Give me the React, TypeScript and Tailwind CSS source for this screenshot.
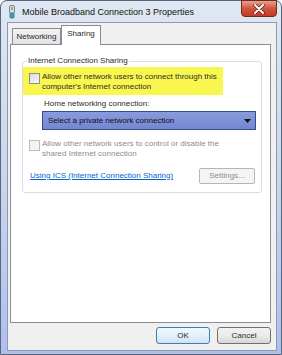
import React from "react";

function ModemIcon() {
  return (
    <svg width="8" height="14" viewBox="0 0 8 14">
      <rect x="1.5" y="0.5" width="5" height="8" rx="1.5" fill="#d9dde2" stroke="#7d8590" />
      <rect x="2" y="8" width="4" height="5" rx="1" fill="#3aa6b9" stroke="#2b7080" strokeWidth="0.8" />
      <rect x="3" y="2" width="2" height="3" fill="#9aa3ad" />
    </svg>
  );
}

function CloseGlyph() {
  return (
    <svg width="12" height="10" viewBox="0 0 12 10">
      <path d="M2 1 L10 9 M10 1 L2 9" stroke="#5a1d14" strokeWidth="3.4" strokeLinecap="round" />
      <path d="M2 1 L10 9 M10 1 L2 9" stroke="#ffffff" strokeWidth="2" strokeLinecap="round" />
    </svg>
  );
}

function CheckBox({ disabled }: { disabled?: boolean }) {
  return (
    <div
      className={`w-[11px] h-[11px] shrink-0 border ${
        disabled
          ? "border-[#bcbcbc] bg-[#f4f4f4]"
          : "border-[#8e8f8f] bg-gradient-to-br from-[#dcdcdc] to-[#f7f7f7]"
      }`}
    />
  );
}

export default function App() {
  return (
    <div
      className="w-[282px] h-[355px] bg-[#f3f5f8] text-[8px] leading-[10px] text-[#2a2a2a]"
      style={{ fontFamily: '"Liberation Sans", Arial, sans-serif' }}
    >
      <div className="h-full flex flex-col rounded-t-[7px] border border-[#59677a] bg-gradient-to-b from-[#dfe7f2] via-[#c9d6ec] to-[#aebfee]">
        {/* Title bar */}
        <div className="h-[21px] flex items-start shrink-0">
          <div className="ml-[7px] mt-[4px]">
            <ModemIcon />
          </div>
          <span className="ml-[6px] mt-[6px] text-[9px] leading-[11px] text-[#111]">
            Mobile Broadband Connection 3 Properties
          </span>
          <div className="ml-auto mr-[4px] -mt-px w-[36px] h-[17px] flex items-center justify-center rounded-b-[4px] border border-[#6e2a20] bg-gradient-to-b from-[#e8a191] via-[#d0533d] to-[#c23b25]">
            <CloseGlyph />
          </div>
        </div>

        {/* Client area */}
        <div className="flex-1 flex flex-col ml-[6px] mr-[4px] mb-[3px] border border-[#8d9bb2] bg-[#f0f0f0] pl-[2px] pr-[5px] pt-[2px]">
          {/* Tabs */}
          <div className="flex items-end h-[19px] pl-[2px] relative z-10">
            <div className="w-[49px] h-[16px] border border-b-0 border-[#898c95] bg-gradient-to-b from-[#f2f2f2] to-[#e3e3e3] flex items-center justify-center">
              Networking
            </div>
            <div className="w-[40px] h-[20px] -mb-px border border-b-0 border-[#898c95] bg-white flex items-start justify-center pt-[3px]">
              Sharing
            </div>
          </div>

          {/* Panel */}
          <div className="h-[279px] border border-[#898c95] bg-white pl-[11px] pr-[8px] pt-[11px]">
            <fieldset className="border border-[#d5dfe5] rounded-[3px] pb-[8px]">
              <legend className="ml-[4px] px-[1px]">Internet Connection Sharing</legend>
              <div className="mt-[1px] w-[200px] h-[28px] bg-[#f9f74f] flex items-start pl-[6px] pt-[5px]">
                <div className="mt-[1px]">
                  <CheckBox />
                </div>
                <div className="ml-[2px]">
                  Allow other network users to connect through this
                  <br />
                  computer's Internet connection
                </div>
              </div>
              <div className="mt-[4px] ml-[21px]">Home networking connection:</div>
              <div className="mt-[2px] ml-[19px] w-[214px] h-[19px] border border-[#2f4f8f] bg-gradient-to-b from-[#8a9adc] to-[#7386d2] flex items-center pl-[5px] pr-[4px] text-[#101010]">
                <span>Select a private network connection</span>
                <svg className="ml-auto" width="7" height="4" viewBox="0 0 7 4">
                  <path d="M0 0 H7 L3.5 4 Z" fill="#111" />
                </svg>
              </div>
              <div className="mt-[9px] ml-[6px] flex items-start">
                <div className="mt-[1px]">
                  <CheckBox disabled />
                </div>
                <div className="ml-[2px] text-[#8d8d8d]">
                  Allow other network users to control or disable the
                  <br />
                  shared Internet connection
                </div>
              </div>
              <div className="mt-[9px] ml-[7px] mr-[6px] flex items-center">
                <span className="text-[#0066cc] underline">Using ICS (Internet Connection Sharing)</span>
                <div className="ml-auto w-[56px] h-[16px] border border-[#b5b5b5] rounded-[2px] bg-[#f4f4f4] flex items-center justify-center text-[#8d8d8d]">
                  Settings...
                </div>
              </div>
            </fieldset>
          </div>

          {/* Buttons */}
          <div className="flex justify-end gap-[7px] mt-[4px]">
            <div className="w-[54px] h-[17px] rounded-[3px] border border-[#3c7fb1] bg-gradient-to-b from-[#f2f8fd] via-[#e3eff9] to-[#cfe3f4] flex items-center justify-center">
              OK
            </div>
            <div className="w-[54px] h-[17px] rounded-[3px] border border-[#707070] bg-gradient-to-b from-[#f2f2f2] via-[#ebebeb] to-[#d6d6d6] flex items-center justify-center">
              Cancel
            </div>
          </div>
        </div>
      </div>
    </div>
  );
}
